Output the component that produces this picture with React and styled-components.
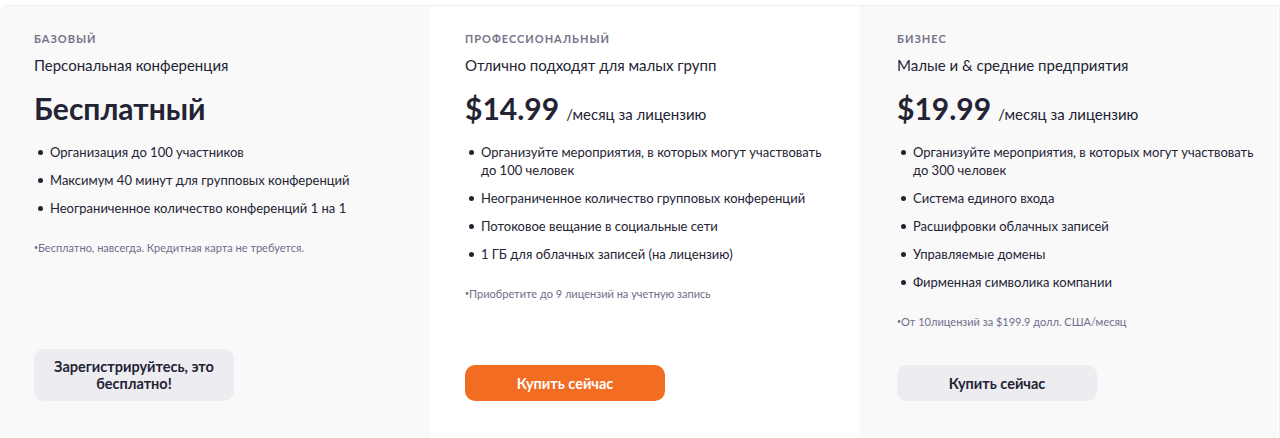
import React from 'react';
import styled, { createGlobalStyle } from 'styled-components';

const GlobalStyle = createGlobalStyle`
  body {
    margin: 0;
    background: #ffffff;
    font-family: Lato, "Noto Sans", "Liberation Sans", sans-serif;
    color: #232333;
  }
`;

const Wrapper = styled.div`
  padding-top: 5px;
`;

const Plans = styled.div`
  display: grid;
  grid-template-columns: 430px 430px 418px;
  border-top: 1px solid #ededf0;
  border-right: 1px solid #f0f0f2;
  border-top-left-radius: 8px;
  height: 432px;
  overflow: hidden;
`;

const Card = styled.div`
  display: flex;
  flex-direction: column;
  padding: 26px ${(p) => p.$padRight}px 37px ${(p) => p.$padLeft}px;
  background: ${(p) => (p.$highlight ? '#ffffff' : '#f9f9fa')};
`;

const Label = styled.div`
  font-size: 11px;
  font-weight: 700;
  letter-spacing: 1px;
  color: #747487;
  line-height: 14px;
`;

const Subtitle = styled.div`
  margin-top: 9px;
  font-size: 15px;
  line-height: 20px;
`;

const PriceRow = styled.div`
  display: flex;
  align-items: baseline;
  gap: 7px;
  margin-top: 15px;
  height: 38px;
`;

const Price = styled.span`
  font-size: 30px;
  font-weight: 700;
  color: #232333;
`;

const Period = styled.span`
  font-size: 15px;
`;

const Features = styled.ul`
  list-style: none;
  margin: 15px 0 0;
  padding: 0;
  display: flex;
  flex-direction: column;
  gap: 10px;
`;

const Feature = styled.li`
  position: relative;
  padding-left: 16px;
  font-size: 13px;
  line-height: 18px;

  &::before {
    content: '';
    position: absolute;
    left: 4px;
    top: 7px;
    width: 5px;
    height: 5px;
    border-radius: 50%;
    background: #232333;
  }
`;

const Note = styled.div`
  margin-top: 24px;
  font-size: 11px;
  line-height: 14px;
  color: #6e6e8a;

  &::before {
    content: '•';
    font-size: 7px;
    vertical-align: top;
    position: relative;
    top: -1px;
  }
`;

const Button = styled.button`
  margin-top: auto;
  width: 200px;
  min-height: 36px;
  padding: ${(p) => (p.$tall ? '9px 16px' : '0 16px')};
  border: none;
  border-radius: 10px;
  font-family: inherit;
  font-size: 14.5px;
  font-weight: 700;
  line-height: 17px;
  cursor: pointer;
  background: ${(p) => (p.$primary ? '#f26d21' : '#ececf1')};
  color: ${(p) => (p.$primary ? '#ffffff' : '#232333')};
`;

const plans = [
  {
    label: 'БАЗОВЫЙ',
    subtitle: 'Персональная конференция',
    price: 'Бесплатный',
    features: [
      'Организация до 100 участников',
      'Максимум 40 минут для групповых конференций',
      'Неограниченное количество конференций 1 на 1',
    ],
    note: 'Бесплатно, навсегда. Кредитная карта не требуется.',
    button: 'Зарегистрируйтесь, это бесплатно!',
    tall: true,
    padLeft: 34,
    padRight: 34,
  },
  {
    label: 'ПРОФЕССИОНАЛЬНЫЙ',
    subtitle: 'Отлично подходят для малых групп',
    price: '$14.99',
    period: '/месяц за лицензию',
    features: [
      'Организуйте мероприятия, в которых могут участвовать до 100 человек',
      'Неограниченное количество групповых конференций',
      'Потоковое вещание в социальные сети',
      '1 ГБ для облачных записей (на лицензию)',
    ],
    note: 'Приобретите до 9 лицензий на учетную запись',
    button: 'Купить сейчас',
    primary: true,
    highlight: true,
    padLeft: 35,
    padRight: 35,
  },
  {
    label: 'БИЗНЕС',
    subtitle: 'Малые и & средние предприятия',
    price: '$19.99',
    period: '/месяц за лицензию',
    features: [
      'Организуйте мероприятия, в которых могут участвовать до 300 человек',
      'Система единого входа',
      'Расшифровки облачных записей',
      'Управляемые домены',
      'Фирменная символика компании',
    ],
    note: 'От 10лицензий за $199.9 долл. США/месяц',
    button: 'Купить сейчас',
    padLeft: 37,
    padRight: 16,
  },
];

function App() {
  return (
    <Wrapper>
      <GlobalStyle />
      <Plans>
        {plans.map((plan) => (
          <Card
            key={plan.label}
            $highlight={plan.highlight}
            $padLeft={plan.padLeft}
            $padRight={plan.padRight}
          >
            <Label>{plan.label}</Label>
            <Subtitle>{plan.subtitle}</Subtitle>
            <PriceRow>
              <Price>{plan.price}</Price>
              {plan.period && <Period>{plan.period}</Period>}
            </PriceRow>
            <Features>
              {plan.features.map((f) => (
                <Feature key={f}>{f}</Feature>
              ))}
            </Features>
            <Note>{plan.note}</Note>
            <Button $primary={plan.primary} $tall={plan.tall}>
              {plan.button}
            </Button>
          </Card>
        ))}
      </Plans>
    </Wrapper>
  );
}

export default App;
